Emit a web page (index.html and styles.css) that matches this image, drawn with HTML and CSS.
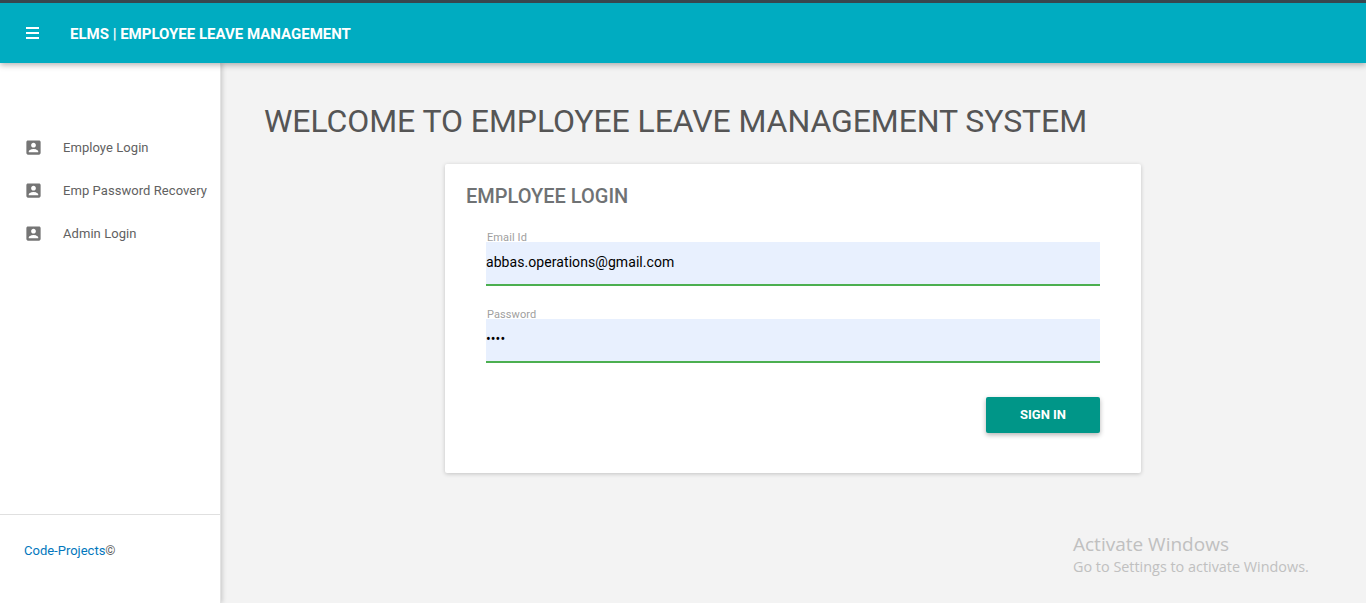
FILE: index.html
```html
<!DOCTYPE html>
<html lang="en">
<head>
    <meta charset="UTF-8">
    <meta name="viewport" content="width=device-width, initial-scale=1.0">
    <title>ELMS | Employee Leave Management</title>
    <link rel="stylesheet" href="styles.css">
</head>
<body>
    <header class="topbar">
        <div class="menu-icon">
            <span></span>
            <span></span>
            <span></span>
        </div>
        <span class="brand">ELMS | EMPLOYEE LEAVE MANAGEMENT</span>
    </header>

    <div class="layout">
        <aside class="sidebar">
            <nav class="side-nav">
                <a class="side-link" href="#">
                    <svg class="side-icon" viewBox="0 0 24 24"><path d="M3 5v14c0 1.1.9 2 2 2h14c1.1 0 2-.9 2-2V5c0-1.1-.9-2-2-2H5c-1.1 0-2 .9-2 2zm12 4c0 1.66-1.34 3-3 3s-3-1.34-3-3 1.34-3 3-3 3 1.34 3 3zm-9 8c0-2 4-3.1 6-3.1s6 1.1 6 3.1v1H6v-1z"/></svg>
                    Employe Login
                </a>
                <a class="side-link" href="#">
                    <svg class="side-icon" viewBox="0 0 24 24"><path d="M3 5v14c0 1.1.9 2 2 2h14c1.1 0 2-.9 2-2V5c0-1.1-.9-2-2-2H5c-1.1 0-2 .9-2 2zm12 4c0 1.66-1.34 3-3 3s-3-1.34-3-3 1.34-3 3-3 3 1.34 3 3zm-9 8c0-2 4-3.1 6-3.1s6 1.1 6 3.1v1H6v-1z"/></svg>
                    Emp Password Recovery
                </a>
                <a class="side-link" href="#">
                    <svg class="side-icon" viewBox="0 0 24 24"><path d="M3 5v14c0 1.1.9 2 2 2h14c1.1 0 2-.9 2-2V5c0-1.1-.9-2-2-2H5c-1.1 0-2 .9-2 2zm12 4c0 1.66-1.34 3-3 3s-3-1.34-3-3 1.34-3 3-3 3 1.34 3 3zm-9 8c0-2 4-3.1 6-3.1s6 1.1 6 3.1v1H6v-1z"/></svg>
                    Admin Login
                </a>
            </nav>
            <div class="side-footer">
                <a href="#">Code-Projects</a>©
            </div>
        </aside>

        <main class="content">
            <h1 class="page-title">WELCOME TO EMPLOYEE LEAVE MANAGEMENT SYSTEM</h1>

            <section class="card">
                <h2 class="card-title">EMPLOYEE LOGIN</h2>
                <form class="login-form">
                    <div class="field">
                        <label for="email">Email Id</label>
                        <input id="email" type="text" value="abbas.operations@gmail.com">
                    </div>
                    <div class="field">
                        <label for="password">Password</label>
                        <input id="password" type="password" value="1234">
                    </div>
                    <div class="form-actions">
                        <button class="signin" type="button">SIGN IN</button>
                    </div>
                </form>
            </section>
        </main>
    </div>

    <!-- Windows watermark sits over the page -->
    <div class="watermark">
        <div class="watermark-title">Activate Windows</div>
        <div class="watermark-text">Go to Settings to activate Windows.</div>
    </div>
</body>
</html>
```

FILE: styles.css
```css
* {
    box-sizing: border-box;
}

html, body {
    height: 100%;
}

body {
    margin: 0;
    font-family: 'Roboto', sans-serif;
    background-color: #f3f3f3;
    display: flex;
    flex-direction: column;
    overflow: hidden;
}

/* Top bar */
.topbar {
    height: 63px;
    flex: none;
    display: flex;
    align-items: center;
    padding-left: 26px;
    background-color: #00acc1;
    border-top: 3px solid #37474f;
    box-shadow: 0 2px 6px rgba(0, 0, 0, 0.3);
    position: relative;
    z-index: 2;
}

.menu-icon {
    width: 13px;
    display: flex;
    flex-direction: column;
    gap: 3px;
    margin-right: 31px;
}

.menu-icon span {
    height: 2px;
    background-color: #ffffff;
}

.brand {
    color: #ffffff;
    font-size: 15px;
    font-weight: 700;
    line-height: 20px;
    padding-top: 1px;
}

.layout {
    flex: 1;
    display: flex;
    min-height: 0;
}

/* Sidebar */
.sidebar {
    width: 221px;
    flex: none;
    display: flex;
    flex-direction: column;
    background-color: #ffffff;
    border-right: 1px solid #e3e3e3;
    box-shadow: 1px 0 5px rgba(0, 0, 0, 0.2);
}

.side-nav {
    flex: 1;
    padding-top: 63px;
}

.side-link {
    height: 43px;
    display: flex;
    align-items: center;
    padding-left: 24px;
    color: #616161;
    font-size: 13px;
    letter-spacing: 0.06px;
    text-decoration: none;
}

.side-icon {
    width: 19px;
    height: 19px;
    margin-right: 20px;
    fill: #757575;
}

.side-footer {
    height: 89px;
    padding: 28px 0 0 24px;
    border-top: 1px solid #e0e0e0;
    color: #616161;
    font-size: 13px;
    line-height: 16px;
}

.side-footer a {
    color: #0277bd;
    text-decoration: none;
}

/* Main content */
.content {
    flex: 1;
    padding: 0 225px 0 43px;
}

.page-title {
    margin: 38px 0 23px;
    color: #555555;
    font-size: 32px;
    font-weight: 400;
    line-height: 40px;
    letter-spacing: -0.08px;
    white-space: nowrap;
}

.card {
    width: 696px;
    height: 309px;
    margin-left: 181px;
    padding: 20px 41px 0 21px;
    background-color: #ffffff;
    border-radius: 2px;
    box-shadow: 0 1px 4px rgba(0, 0, 0, 0.2);
}

.card-title {
    margin: 0 0 23px;
    color: #6f7274;
    font-size: 20px;
    font-weight: 500;
    line-height: 24px;
}

.login-form {
    padding-left: 20px;
}

.field {
    margin-bottom: 22px;
}

.field label {
    display: block;
    height: 11px;
    padding-left: 1px;
    color: #a0a0a0;
    font-size: 11px;
    line-height: 13px;
    letter-spacing: 0.1px;
}

.field input {
    display: block;
    width: 100%;
    height: 44px;
    padding: 0 0 2px;
    border: none;
    border-bottom: 2px solid #4caf50;
    border-radius: 0;
    outline: none;
    background-color: #e8f0fe;
    color: #000000;
    font-family: 'Roboto', sans-serif;
    font-size: 14px;
    letter-spacing: 0.07px;
}

.form-actions {
    display: flex;
    justify-content: flex-end;
    padding-top: 12px;
}

.signin {
    width: 114px;
    height: 36px;
    padding: 0 0 2px;
    border: none;
    border-radius: 2px;
    background-color: #009688;
    color: #ffffff;
    font-family: 'Roboto', sans-serif;
    font-size: 13px;
    font-weight: 700;
    box-shadow: 0 2px 5px rgba(0, 0, 0, 0.3);
    cursor: pointer;
}

/* Watermark */
.watermark {
    position: absolute;
    left: 1073px;
    top: 532px;
    color: #c0c0c0;
    font-family: 'Open Sans', sans-serif;
    pointer-events: none;
}

.watermark-title {
    font-size: 19px;
    line-height: 24px;
}

.watermark-text {
    font-size: 14.4px;
    line-height: 21px;
}
```
